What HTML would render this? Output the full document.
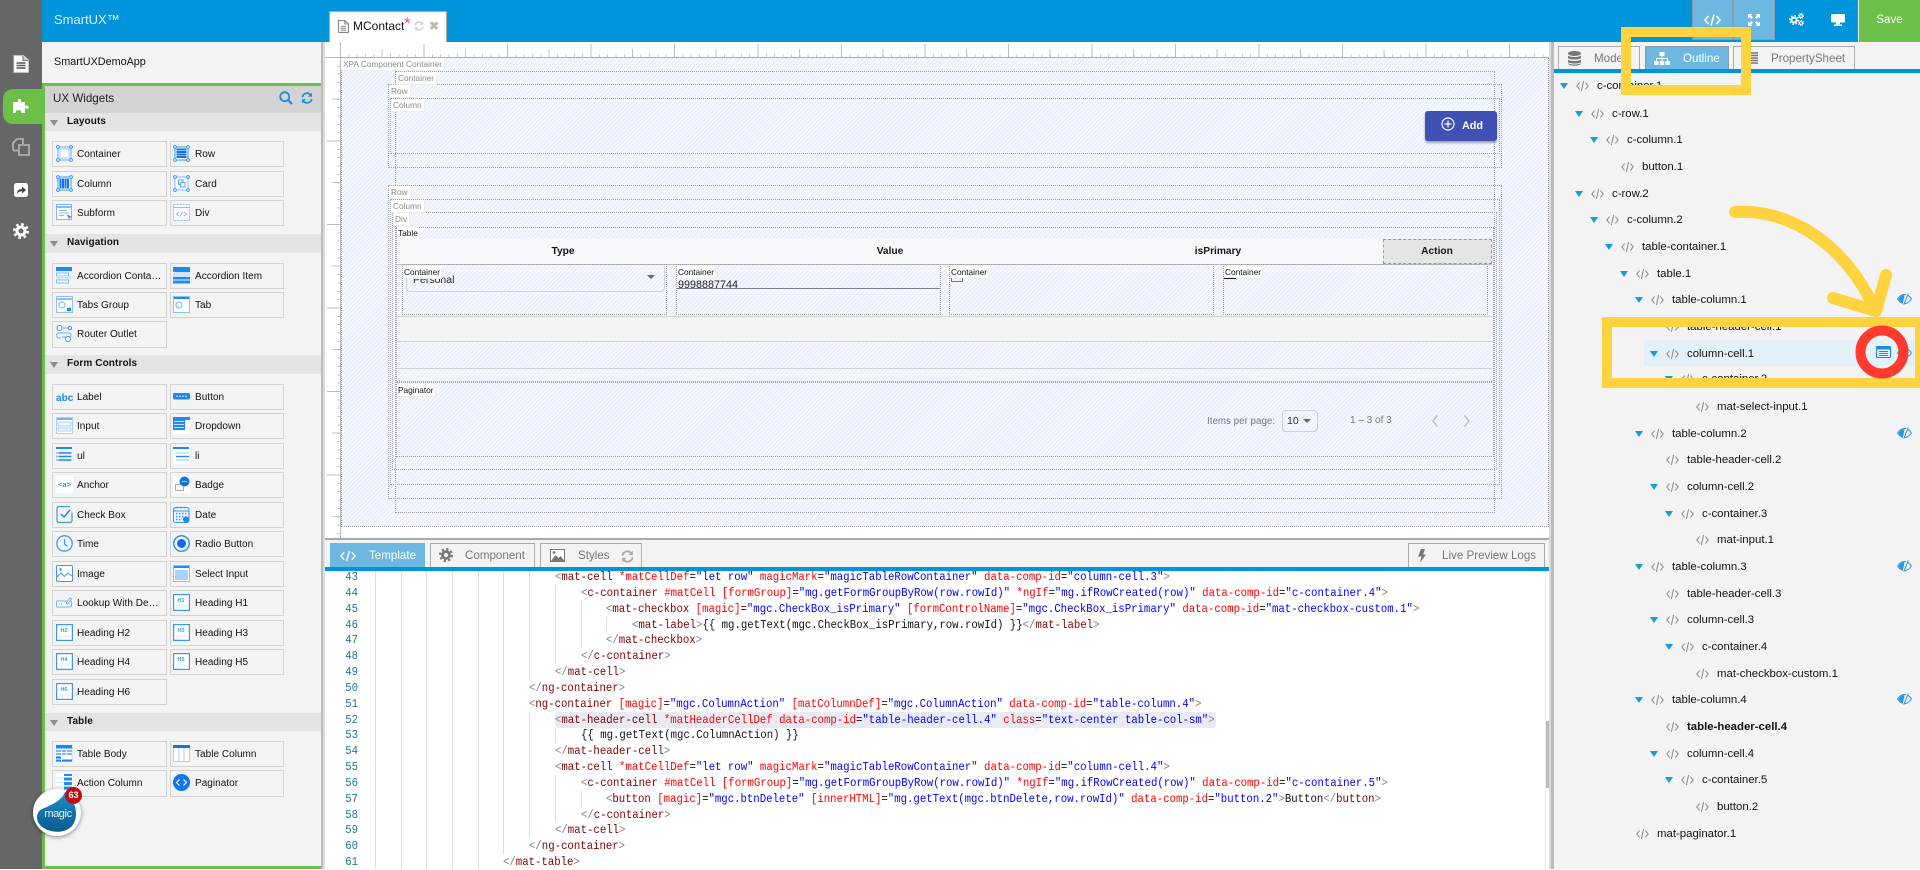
<!DOCTYPE html>
<html lang="en"><head><meta charset="utf-8"><title>SmartUX</title>
<style>
*{box-sizing:border-box}
html,body{margin:0;padding:0;width:1920px;height:869px;overflow:hidden;background:#fff;font-family:"Liberation Sans",Arial,sans-serif;color:#111}
.p{position:absolute}
svg{display:block;overflow:visible}
.w{position:absolute;height:26px;line-height:25px;font-size:10px;border:1px solid #d2d2d2;padding-left:24px;white-space:nowrap;letter-spacing:.03px}
.c1{left:52px;width:115px}.c2{left:170px;width:114px}
.w svg{position:absolute;left:3px;top:3px;width:17px;height:17px}
.c2 svg{left:2px}
.sec{position:absolute;left:45px;width:276px;background:#e4e4e4;font-weight:bold;font-size:10px;padding-left:22px;letter-spacing:.1px}
.sec:before{content:"";position:absolute;left:5px;top:7px;border-top:6px solid #8b8b8b;border-left:4.5px solid transparent;border-right:4.5px solid transparent}
.hatch{background:repeating-linear-gradient(135deg,#e9eefc 0 1.5px,#f7f9ff 1.5px 3px)}
.b{position:absolute;border:1px dotted #a3a3ad}
.l{position:absolute;background:#fff;font-size:8.3px;line-height:12px;height:12px;color:#8a8a8a;padding:0 2px;white-space:nowrap;box-shadow:1px 1px 0 #eee}
.l.k{color:#111;padding:0 1px}
.th{position:absolute;top:239px;height:25px;line-height:25px;font-weight:bold;font-size:10.2px;transform:translateX(-50%);color:#151515}
.tab{position:absolute;height:24px;border:1px solid #aaa;border-bottom:0;font-size:11.6px;line-height:23px;color:#777;background:#f3f3f3}
.tab span{position:absolute;white-space:nowrap}
.cl{position:absolute;left:375px;height:16px;font:11.7px/16px "Liberation Mono",monospace;white-space:pre;color:#111;transform:scaleX(.913);transform-origin:0 0}
.ln{position:absolute;left:334px;width:24px;text-align:right;font:11.7px/16px "Liberation Mono",monospace;color:#237893;transform:scaleX(.913);transform-origin:100% 0}
.g{color:#808080}.t{color:#800000}.a{color:#f00}.v{color:#00f}
.gd{position:absolute;width:1px;background:#dcdcdc}
.r{position:absolute;left:calc(1557px + var(--l)*15px);height:16px;line-height:18px;font-size:11.4px;padding-left:40px;white-space:nowrap;color:#111}
.r svg{position:absolute;left:18.5px;top:2.5px;width:13px;height:12px}
.r.o:before{content:"";position:absolute;left:2.5px;top:6px;border-top:6px solid #1a9ad9;border-left:4.5px solid transparent;border-right:4.5px solid transparent}
.eye{position:absolute;left:1897px;width:15px;height:12px}
.hx{font:bold 5.5px "Liberation Sans",sans-serif;fill:#3b97f3}
</style></head><body>

<svg width="0" height="0" style="position:absolute"><defs>
<symbol id="c" viewBox="0 0 13 12"><path d="M3.6 2.6L.8 6l2.8 3.4M9.4 2.6L12.2 6 9.4 9.4M7.6 1L5.4 11" fill="none" stroke="#8a8a8a" stroke-width="1"/></symbol>
<symbol id="h" viewBox="0 0 17 17"><circle cx="2" cy="2" r="1.4" fill="#fff" stroke="#3b97f3"/><circle cx="15" cy="2" r="1.4" fill="#fff" stroke="#3b97f3"/><circle cx="2" cy="15" r="1.4" fill="#fff" stroke="#3b97f3"/><circle cx="15" cy="15" r="1.4" fill="#fff" stroke="#3b97f3"/></symbol>
<symbol id="container" viewBox="0 0 17 17"><rect x="2" y="2" width="13" height="13" fill="#eaf4ff" stroke="#6fb2f7"/><rect x="4" y="4" width="9" height="9" fill="#fff" stroke="#a9d2fa"/><use href="#h"/></symbol>
<symbol id="row" viewBox="0 0 17 17"><rect x="2" y="2" width="13" height="13" fill="#fff" stroke="#3b97f3"/><path d="M3.500 4.500h10M3.500 7h10M3.500 9.500h10M3.500 12h10" stroke="#1273e6" stroke-width="2"/><use href="#h"/></symbol>
<symbol id="column" viewBox="0 0 17 17"><rect x="2" y="2" width="13" height="13" fill="#fff" stroke="#3b97f3"/><path d="M4.500 3.500v10M7 3.500v10M9.500 3.500v10M12 3.500v10" stroke="#1273e6" stroke-width="2"/><use href="#h"/></symbol>
<symbol id="card" viewBox="0 0 17 17"><rect x="2" y="2" width="13" height="13" fill="#f5f9ff" stroke="#8cc1f8"/><rect x="5.500" y="5" width="4.500" height="4.500" fill="none" stroke="#5aa7f5"/><rect x="7.500" y="7.500" width="4.500" height="4.500" fill="#fff" stroke="#5aa7f5"/><use href="#h"/></symbol>
<symbol id="subform" viewBox="0 0 17 17"><rect x=".5" y=".5" width="15" height="15" fill="#fff" stroke="#7db9f7"/><path d="M1 3h14" stroke="#7db9f7" stroke-width="2"/><path d="M3 6.500h8M3 9h10M3 11.500h5" stroke="#7db9f7"/><path d="M10.500 10l5.500 3-2.500 1v2.500z" fill="#3b97f3"/></symbol>
<symbol id="div" viewBox="0 0 17 17"><rect x=".5" y=".5" width="16" height="16" fill="#f7fbff" stroke="#8cc1f8" stroke-dasharray="2 1"/><path d="M.5 3.500h16" stroke="#8cc1f8"/><path d="M6 8l-2.500 2L6 12M11 8l2.500 2-2.500 2M9.500 7.500l-2 5" fill="none" stroke="#b6a7f0"/></symbol>
<symbol id="accc" viewBox="0 0 17 17"><rect y="0" width="16" height="4" fill="#1e88f5"/><rect x=".5" y="6" width="12" height="3" fill="#fff" stroke="#7db9f7"/><rect x=".5" y="9" width="15" height="3" fill="#cfe5fc"/><rect x=".5" y="13" width="12" height="3" fill="#fff" stroke="#7db9f7"/></symbol>
<symbol id="acci" viewBox="0 0 17 17"><rect width="17" height="5" fill="#1e88f5"/><rect y="5" width="17" height="5" fill="#cfe5fc"/><rect y="10" width="17" height="2.500" fill="#1e88f5"/><rect y="13.500" width="17" height="3" fill="#1e88f5"/></symbol>
<symbol id="tabs" viewBox="0 0 17 17"><rect x=".5" y=".5" width="16" height="16" fill="#fff" stroke="#8cc1f8"/><path d="M1 3h15" stroke="#8cc1f8" stroke-width="2"/><circle cx="6" cy="9" r="3" fill="none" stroke="#6fb2f7"/><rect x="11" y="12" width="4" height="3" fill="#1e88f5"/></symbol>
<symbol id="tab" viewBox="0 0 17 17"><rect x=".5" y=".5" width="16" height="16" fill="#fff" stroke="#8cc1f8"/><path d="M1 2h15" stroke="#1e88f5" stroke-width="2"/><circle cx="6" cy="9" r="3" fill="none" stroke="#6fb2f7"/></symbol>
<symbol id="router" viewBox="0 0 17 17"><path d="M5 3h8M3 8h10a2 2 0 0 1 0 4H6M5 13H3a2 2 0 0 1 0-5" fill="none" stroke="#6fb2f7"/><circle cx="3.500" cy="3" r="2.500" fill="#fff" stroke="#3b97f3"/><circle cx="14" cy="3" r="1.500" fill="#fff" stroke="#3b97f3"/><circle cx="12" cy="14" r="2.500" fill="#fff" stroke="#3b97f3"/></symbol>
<symbol id="button" viewBox="0 0 17 17"><rect y="5" width="17" height="6.500" rx="1.500" fill="#1e88f5"/><path d="M3 8.300h11" stroke="#cfe5fc" stroke-dasharray="2 1"/></symbol>
<symbol id="input" viewBox="0 0 17 17"><rect x=".5" y=".5" width="16" height="16" fill="#fff" stroke="#a9d2fa"/><path d="M1 2h15" stroke="#6fb2f7" stroke-width="2"/><rect x="2" y="5" width="13" height="4" fill="#f4f9ff" stroke="#a9d2fa"/><rect x="2" y="11" width="13" height="3" fill="#f4f9ff" stroke="#a9d2fa"/></symbol>
<symbol id="dropdown" viewBox="0 0 17 17"><rect width="17" height="17" fill="#fff"/><path d="M0 1.500h17" stroke="#1e88f5" stroke-width="3"/><rect x="0" y="0" width="12" height="13" fill="#1e88f5"/><path d="M1 4.500h10M1 7.500h10M1 10.500h10" stroke="#cfe5fc"/></symbol>
<symbol id="ul" viewBox="0 0 17 17"><rect width="16" height="2" y="0" fill="#1e88f5"/><path d="M2.500 6h13M2.500 9.500h13M2.500 13h13" stroke="#1e88f5" stroke-width="1.500"/><path d="M.5 6h1M.5 9.500h1M.5 13h1" stroke="#1e88f5" stroke-width="1.500"/></symbol>
<symbol id="li" viewBox="0 0 17 17"><rect width="17" height="17" fill="#fff"/><rect width="16" height="2" fill="#1e88f5"/><path d="M3 6h13M3 13h13" stroke="#bcdcfb" stroke-width="1.500"/><path d="M3 9.500h13" stroke="#1e88f5" stroke-width="1.300"/></symbol>
<symbol id="badge" viewBox="0 0 17 17"><rect width="17" height="17" fill="#fff"/><rect x="2.500" y="8.500" width="8" height="6" fill="none" stroke="#aaa"/><circle cx="11.500" cy="5.500" r="5" fill="#1273e6"/><path d="M9 5.500h5" stroke="#fff" stroke-dasharray="1.500 .7"/></symbol>
<symbol id="check" viewBox="0 0 17 17"><path d="M14 1H3a2 2 0 0 0-2 2v12a2 2 0 0 0 2 2h11a2 2 0 0 0 2-2V7" transform="translate(0 -.5)" fill="none" stroke="#3b97f3" stroke-width="1.200"/><path d="M5 8l3 3 6-7" fill="none" stroke="#1e88f5" stroke-width="1.500"/></symbol>
<symbol id="date" viewBox="0 0 17 17"><rect x=".5" y="1.500" width="15.500" height="15" rx="2" fill="#eaf4ff" stroke="#3b97f3"/><path d="M1 5h15" stroke="#3b97f3"/><path d="M4 .5v2M8 .5v2M12 .5v2" stroke="#3b97f3"/><path d="M3 7.500h10M3 10.500h10M3 13.500h5" stroke="#3b97f3" stroke-dasharray="1.500 1.500" stroke-width="1.500"/><circle cx="13" cy="13.500" r="3" fill="#1e88f5"/></symbol>
<symbol id="time" viewBox="0 0 17 17"><circle cx="8.500" cy="8.500" r="7.700" fill="#f4f9ff" stroke="#3b97f3" stroke-width="1.300"/><path d="M8.500 4v5l3 2.500" fill="none" stroke="#3b97f3" stroke-width="1.200"/></symbol>
<symbol id="radio" viewBox="0 0 17 17"><circle cx="8.500" cy="8.500" r="7.700" fill="#fff" stroke="#1e88f5" stroke-width="1.400"/><circle cx="8.500" cy="8.500" r="4.500" fill="#0a6cf0"/></symbol>
<symbol id="image" viewBox="0 0 17 17"><rect x=".5" y=".5" width="16" height="16" rx="1.500" fill="#fff" stroke="#3b97f3"/><circle cx="4.500" cy="4.500" r="1.300" fill="#3b97f3"/><path d="M1 12l4-4 3.500 3.500L12 8l4 3" fill="none" stroke="#3b97f3"/></symbol>
<symbol id="select" viewBox="0 0 17 17"><rect x=".5" y=".5" width="16" height="16" fill="#fff" stroke="#8cc1f8"/><path d="M1 2h15" stroke="#1e88f5" stroke-width="2"/><rect x="2" y="5" width="13" height="10" fill="#a9d2fa"/></symbol>
<symbol id="lookup" viewBox="0 0 17 17"><rect x=".5" y="7" width="15" height="6" rx="1.500" fill="#f4f9ff" stroke="#6fb2f7"/><path d="M10 9l4-5 1.500 1-4 5z" fill="#fff" stroke="#6fb2f7"/><path d="M3 10h4" stroke="#6fb2f7" stroke-dasharray="1 1"/></symbol>
<symbol id="hn" viewBox="0 0 17 17"><rect x=".6" y=".6" width="15.800" height="15.800" fill="#fff" stroke="#3b97f3" stroke-width="1.200"/><path d="M3 10.500h11v3h-6l-2 2H3z" fill="#eef5fd"/></symbol>
<symbol id="tbody" viewBox="0 0 17 17"><rect width="16" height="16.500" fill="#fff" stroke="#8cc1f8" stroke-width=".5"/><rect width="16" height="3.500" fill="#1e88f5"/><path d="M0 6h16M0 9h16" stroke="#7db9f7" stroke-width="2"/><rect y="11.500" width="5" height="2" fill="#1273e6"/><rect y="14.500" width="16" height="2" fill="#1e88f5"/><path d="M5.500 4v12M10.500 4v8" stroke="#fff"/></symbol>
<symbol id="tcol" viewBox="0 0 17 17"><rect x=".5" y=".5" width="16" height="16" fill="#fff" stroke="#a9d2fa"/><rect width="17" height="3" fill="#1273e6"/><path d="M6 3v13M11 3v13" stroke="#a9d2fa"/></symbol>
<symbol id="acol" viewBox="0 0 17 17"><rect width="17" height="17" fill="#fff"/><path d="M0 4h8M0 8.500h8M0 13h8" stroke="#cfe5fc"/><rect x="8" width="8" height="2" fill="#1e88f5"/><rect x="8" y="3.500" width="8" height="3" fill="#1e88f5"/><rect x="8" y="8" width="8" height="3" fill="#1e88f5"/><rect x="8" y="12.500" width="8" height="3" fill="#1e88f5"/></symbol>
<symbol id="pag" viewBox="0 0 17 17"><circle cx="8.500" cy="8.500" r="8.500" fill="#0a78f0"/><path d="M6.500 5.500l-3 3 3 3M10.500 5.500l3 3-3 3" fill="none" stroke="#fff" stroke-width="1.200"/></symbol>
<symbol id="gear" viewBox="0 0 16 16"><circle cx="8" cy="8" r="4" fill="none" stroke="currentColor" stroke-width="3"/><circle cx="8" cy="8" r="6.700" fill="none" stroke="currentColor" stroke-width="2.600" stroke-dasharray="2.600 2.660"/></symbol>
<symbol id="ref" viewBox="0 0 14 14"><path d="M1.500 6a5.500 5.500 0 0 1 9.500-2.800M12.500 8A5.500 5.500 0 0 1 3 10.800" fill="none" stroke="currentColor" stroke-width="2"/><path d="M12.800 .8v4.700H8.100zM1.200 13.200V8.500h4.700z" fill="currentColor"/></symbol>
<symbol id="doc" viewBox="0 0 12 14"><path d="M.6.600h7l3.800 3.600v9.200H.6z" fill="#fff" stroke="#777"/><path d="M7.500.6v3.600h3.800M2.800 6.800h6M2.800 9h6M2.800 11h6" fill="none" stroke="#777"/></symbol>
<symbol id="eye" viewBox="0 0 15 12"><path d="M.6 6C2.500 3 5 1.500 7.500 1.500S12.500 3 14.400 6c-1.900 3-4.400 4.500-6.900 4.500S2.500 9 .6 6z" fill="none" stroke="#2a95dd" stroke-width="1"/><path d="M1.500 6C3 3.500 5.500 2 7.500 2L6 10C4 9.500 2.500 8 1.500 6z" fill="#2a95dd"/><path d="M10.500 .3L6 11.700" stroke="#f3f3f3" stroke-width="1.300"/><path d="M11.300 .5L6.800 11.700" stroke="#2a95dd"/></symbol>
</defs></svg>

<!-- rail -->
<div class="p" style="left:0;top:0;width:42px;height:869px;background:#666"></div>
<div class="p" style="left:3px;top:89px;width:39px;height:35px;background:#6cc04a;border-radius:10px 0 0 10px"></div>
<svg class="p" style="left:13px;top:55px;width:16px;height:18px" viewBox="0 0 16 18"><path d="M1 .7h9.500L15.300 5v12.300H1z" fill="#fff" stroke="#ddd" stroke-width="1"/><path d="M3.500 8h9M3.500 10.500h9M3.500 13h9" stroke="#555" stroke-width="1.500"/><path d="M10 1v4.500h5" fill="#ccc" stroke="#555" stroke-width=".8"/></svg>
<svg class="p" style="left:13px;top:97px;width:18px;height:17px" viewBox="0 0 18 17"><path d="M5 3.500c-1-2 4-2 3 0v1.500h4v4c2-1 4 0 3.800 1.500S13 12 12 11v5H8c1-2-1-3-2.500-3S2 14 3 16H0V5h5z" fill="#fff"/></svg>
<svg class="p" style="left:12px;top:138px;width:18px;height:18px" viewBox="0 0 18 18"><path d="M1 12.500V5L5 1h6v5" fill="none" stroke="#b0b0b0" stroke-width="1.800"/><path d="M7 7h10v10H7z" fill="#666" stroke="#b0b0b0" stroke-width="1.800"/><path d="M1 12.500h6" stroke="#b0b0b0" stroke-width="1.800"/></svg>
<svg class="p" style="left:14px;top:183px;width:14px;height:14px" viewBox="0 0 14 14"><rect width="14" height="14" rx="2.500" fill="#fff"/><path d="M3 11C3 7.500 5 6 8 6V3.500L12 7l-4 3.500V8.200C6 8.200 4 9 3 11z" fill="#444"/></svg>
<svg class="p" style="left:13px;top:223px;width:16px;height:16px;color:#fff"><use href="#gear"/></svg>

<!-- header -->
<div class="p" style="left:42px;top:0;width:1878px;height:42px;background:#0095da"></div>
<div class="p" style="left:54px;top:11px;font-size:13px;line-height:18px;color:#d9f0fb">SmartUX™</div>
<div class="p" style="left:329px;top:11px;width:118px;height:31px;background:#fff;border:1px solid #aaa;border-bottom:0"></div>
<svg class="p" style="left:338px;top:20px;width:11px;height:13px"><use href="#doc"/></svg>
<div class="p" style="left:353px;top:17px;font-size:12px;line-height:18px;color:#111">MContact</div>
<div class="p" style="left:404px;top:17px;font-size:17px;line-height:14px;color:#f0507c">*</div>
<svg class="p" style="left:414px;top:21px;width:10px;height:10px;color:#ccc"><use href="#ref"/></svg>
<div class="p" style="left:429px;top:18px;font-size:12px;font-weight:bold;line-height:16px;color:#bbb">✖</div>

<div class="p" style="left:1692px;top:0;width:41px;height:40px;background:#6db8e0;border:1px solid #8c9aa5;border-top:0"></div>
<div class="p" style="left:1733px;top:0;width:42px;height:40px;background:#6db8e0;border:1px solid #8c9aa5;border-top:0"></div>
<svg class="p" style="left:1704px;top:14px;width:17px;height:12px" viewBox="0 0 17 12"><path d="M4.500 2L1 6l3.500 4M12.500 2L16 6l-3.500 4M10 .5l-3 11" fill="none" stroke="#fff" stroke-width="1.600"/></svg>
<svg class="p" style="left:1748px;top:14px;width:12px;height:12px" viewBox="0 0 12 12"><path d="M0 0h4.500L3 1.500l2 2L3.500 5l-2-2L0 4.500zM12 0v4.500L10.500 3l-2 2L7 3.500l2-2L7.500 0zM0 12V7.500L1.500 9l2-2L5 8.500l-2 2L4.500 12zM12 12H7.500L9 10.500l-2-2L8.500 7l2 2L12 7.500z" fill="#fff"/></svg>
<svg class="p" style="left:1789px;top:15px;width:10px;height:10px;color:#fff"><use href="#gear"/></svg>
<svg class="p" style="left:1798px;top:13px;width:6px;height:6px;color:#fff"><use href="#gear"/></svg>
<svg class="p" style="left:1798px;top:20px;width:6px;height:6px;color:#fff"><use href="#gear"/></svg>
<svg class="p" style="left:1831px;top:14px;width:14px;height:12px" viewBox="0 0 14 12"><rect width="14" height="8.500" rx="1" fill="#fff"/><rect x="5" y="8.500" width="4" height="2" fill="#fff"/><rect x="3" y="10.500" width="8" height="1.500" fill="#fff"/></svg>
<div class="p" style="left:1858px;top:0;width:62px;height:42px;background:#6cc04a;border-left:1px solid #e8f4e0;color:#fff;font-size:11.5px;line-height:41px;text-align:center">Save</div>

<!-- left panel -->
<div class="p" style="left:42px;top:42px;width:279px;height:827px;background:#f3f3f3"></div>
<div class="p" style="left:54px;top:53px;font-size:10.8px;line-height:18px;color:#111">SmartUXDemoApp</div>
<div class="p" style="left:42px;top:83px;width:279px;height:3px;background:#6cc04a"></div>
<div class="p" style="left:42px;top:86px;width:3px;height:783px;background:#6cc04a"></div>
<div class="p" style="left:42px;top:866px;width:279px;height:3px;background:#6cc04a"></div>
<div class="p" style="left:45px;top:86px;width:276px;height:27px;background:#d3d3d3;font-size:11.6px;line-height:26px;padding-left:8px;color:#222">UX Widgets</div>
<svg class="p" style="left:279px;top:91px;width:14px;height:14px" viewBox="0 0 14 14"><circle cx="5.700" cy="5.700" r="4.500" fill="none" stroke="#1a8fd8" stroke-width="1.800"/><path d="M9 9l4 4" stroke="#1a8fd8" stroke-width="2.200"/></svg>
<svg class="p" style="left:301px;top:92px;width:12px;height:12px;color:#1a8fd8"><use href="#ref"/></svg>

<div class="sec" style="top:113px;height:18px;line-height:18px">Layouts</div>
<div class="w c1" style="top:141px"><svg><use href="#container"/></svg>Container</div>
<div class="w c2" style="top:141px"><svg><use href="#row"/></svg>Row</div>
<div class="w c1" style="top:171px"><svg><use href="#column"/></svg>Column</div>
<div class="w c2" style="top:171px"><svg><use href="#card"/></svg>Card</div>
<div class="w c1" style="top:200px"><svg><use href="#subform"/></svg>Subform</div>
<div class="w c2" style="top:200px"><svg><use href="#div"/></svg>Div</div>

<div class="sec" style="top:234px;height:19px;line-height:18px">Navigation</div>
<div class="w c1" style="top:263px"><svg><use href="#accc"/></svg>Accordion Conta…</div>
<div class="w c2" style="top:263px"><svg><use href="#acci"/></svg>Accordion Item</div>
<div class="w c1" style="top:292px"><svg><use href="#tabs"/></svg>Tabs Group</div>
<div class="w c2" style="top:292px"><svg><use href="#tab"/></svg>Tab</div>
<div class="w c1" style="top:321px;height:27px"><svg><use href="#router"/></svg>Router Outlet</div>

<div class="sec" style="top:355px;height:19px;line-height:18px">Form Controls</div>
<div class="w c1" style="top:384px"><span style="position:absolute;left:3px;top:3px;font:bold 10px/22px 'Liberation Sans',sans-serif;color:#1e88f5">abc</span>Label</div>
<div class="w c2" style="top:384px"><svg><use href="#button"/></svg>Button</div>
<div class="w c1" style="top:413px"><svg><use href="#input"/></svg>Input</div>
<div class="w c2" style="top:413px"><svg><use href="#dropdown"/></svg>Dropdown</div>
<div class="w c1" style="top:443px"><svg><use href="#ul"/></svg>ul</div>
<div class="w c2" style="top:443px"><svg><use href="#li"/></svg>li</div>
<div class="w c1" style="top:472px"><span style="position:absolute;left:3px;top:3px;width:17px;height:17px;background:#fff;border-radius:2px;font:bold 7.5px/18px 'Liberation Sans',sans-serif;color:#3b97f3;text-align:center">&lt;a&gt;</span>Anchor</div>
<div class="w c2" style="top:472px"><svg><use href="#badge"/></svg>Badge</div>
<div class="w c1" style="top:502px"><svg><use href="#check"/></svg>Check Box</div>
<div class="w c2" style="top:502px"><svg><use href="#date"/></svg>Date</div>
<div class="w c1" style="top:531px"><svg><use href="#time"/></svg>Time</div>
<div class="w c2" style="top:531px"><svg><use href="#radio"/></svg>Radio Button</div>
<div class="w c1" style="top:561px"><svg><use href="#image"/></svg>Image</div>
<div class="w c2" style="top:561px"><svg><use href="#select"/></svg>Select Input</div>
<div class="w c1" style="top:590px"><svg><use href="#lookup"/></svg>Lookup With De…</div>
<div class="w c2" style="top:590px"><svg><use href="#hn"/><text x="4.500" y="8" class="hx">H1</text></svg>Heading H1</div>
<div class="w c1" style="top:620px"><svg><use href="#hn"/><text x="4.500" y="8" class="hx">H2</text></svg>Heading H2</div>
<div class="w c2" style="top:620px"><svg><use href="#hn"/><text x="4.500" y="8" class="hx">H3</text></svg>Heading H3</div>
<div class="w c1" style="top:649px"><svg><use href="#hn"/><text x="4.500" y="8" class="hx">H4</text></svg>Heading H4</div>
<div class="w c2" style="top:649px"><svg><use href="#hn"/><text x="4.500" y="8" class="hx">H5</text></svg>Heading H5</div>
<div class="w c1" style="top:679px"><svg><use href="#hn"/><text x="4.500" y="8" class="hx">H6</text></svg>Heading H6</div>

<div class="sec" style="top:713px;height:18px;line-height:18px">Table</div>
<div class="w c1" style="top:741px"><svg><use href="#tbody"/></svg>Table Body</div>
<div class="w c2" style="top:741px"><svg><use href="#tcol"/></svg>Table Column</div>
<div class="w c1" style="top:770px;height:27px"><svg><use href="#acol"/></svg>Action Column</div>
<div class="w c2" style="top:770px;height:27px"><svg><use href="#pag"/></svg>Paginator</div>

<!-- magic -->
<div class="p" style="left:33px;top:789px;width:48px;height:47px;border-radius:50%;background:#fff;box-shadow:0 1px 4px rgba(0,0,0,.45)"></div>
<svg class="p" style="left:33px;top:789px;width:48px;height:47px" viewBox="0 0 48 47"><defs><linearGradient id="mg" x1="0" y1="0" x2="0" y2="1"><stop offset="0" stop-color="#1b8fc9"/><stop offset="1" stop-color="#0a5a90"/></linearGradient></defs><path d="M32 3C29 11 19 16 9 20 3 23 2 31 8 37c8 7 22 8 30 1 8-8 7-24-6-35z" fill="url(#mg)"/></svg>
<div class="p" style="left:35px;top:807px;width:46px;text-align:center;font-size:11px;line-height:14px;color:#e8f4fb;letter-spacing:-.4px">magic</div>
<div class="p" style="left:65px;top:787px;width:17px;height:17px;border-radius:50%;background:#c80a10;color:#fff;font-weight:bold;font-size:9px;line-height:17px;text-align:center">63</div>

<!-- separators -->
<div class="p" style="left:321px;top:42px;width:2px;height:827px;background:#bbb"></div>
<div class="p" style="left:323px;top:42px;width:2px;height:827px;background:#dcdcdc"></div>

<!-- rulers -->
<div class="p" style="left:325px;top:42px;width:1224px;height:498px;background:#fff"></div>
<div class="p" style="left:340px;top:42px;width:1209px;height:15px;background:
repeating-linear-gradient(90deg,#bbb 0 1px,transparent 1px 83.5px) 0 100%/100% 13px no-repeat,
repeating-linear-gradient(90deg,#c4c4c4 0 1px,transparent 1px 41.75px) 0 100%/100% 8px no-repeat,
repeating-linear-gradient(90deg,#ccc 0 1px,transparent 1px 8.35px) 0 100%/100% 3px no-repeat"></div>
<div class="p" style="left:325px;top:57px;width:15px;height:481px;background:
repeating-linear-gradient(180deg,#bbb 0 1px,transparent 1px 83.5px) 100% 0/13px 100% no-repeat,
repeating-linear-gradient(180deg,#c4c4c4 0 1px,transparent 1px 41.75px) 100% 0/8px 100% no-repeat,
repeating-linear-gradient(180deg,#ccc 0 1px,transparent 1px 8.35px) 100% 0/3px 100% no-repeat"></div>
<div class="p" style="left:340px;top:42px;width:1px;height:496px;background:#bbb"></div>
<div class="p" style="left:325px;top:57px;width:1224px;height:1px;background:#bbb"></div>

<!-- canvas -->
<div class="p hatch" style="left:341px;top:58px;width:1208px;height:469px"></div>
<div class="b" style="left:341px;top:57px;width:1208px;height:470px"></div>
<div class="b" style="left:395px;top:71px;width:1100px;height:442px"></div>
<div class="b" style="left:388px;top:84px;width:1114px;height:84px"></div>
<div class="b" style="left:390px;top:98px;width:1110px;height:56px"></div>
<div class="b" style="left:388px;top:185px;width:1114px;height:314px"></div>
<div class="b" style="left:390px;top:199px;width:1110px;height:286px"></div>
<div class="b" style="left:392px;top:212px;width:1105px;height:258px"></div>
<div class="b" style="left:396px;top:227px;width:1098px;height:230px"></div>
<div class="b" style="left:396px;top:382px;width:1098px;height:75px"></div>

<div class="l" style="left:341px;top:58px">XPA Component Container</div>
<div class="l" style="left:396px;top:72px">Container</div>
<div class="l" style="left:389px;top:85px">Row</div>
<div class="l" style="left:391px;top:99px">Column</div>
<div class="l" style="left:389px;top:186px">Row</div>
<div class="l" style="left:391px;top:200px">Column</div>
<div class="l" style="left:393px;top:213px">Div</div>
<div class="l k" style="left:397px;top:227px">Table</div>

<div class="p" style="left:1425px;top:111px;width:72px;height:30px;background:#3f51b5;border-radius:3px;box-shadow:0 2px 2px rgba(0,0,0,.35);color:#fff;font-weight:bold;font-size:10.8px;line-height:30px;padding-left:37px">Add</div>
<svg class="p" style="left:1441px;top:117px;width:14px;height:14px" viewBox="0 0 14 14"><circle cx="7" cy="7" r="6" fill="none" stroke="#fff" stroke-width="1.200"/><path d="M7 3.500v7M3.500 7h7" stroke="#fff" stroke-width="1.200"/></svg>

<div class="p" style="left:398px;top:239px;width:1094px;height:25px;background:#f6f8fa"></div>
<div class="th" style="left:563px">Type</div>
<div class="th" style="left:890px">Value</div>
<div class="th" style="left:1218px">isPrimary</div>
<div class="p" style="left:1383px;top:239px;width:109px;height:25px;background:#e5e5e5;border:1px dashed #999"></div>
<div class="th" style="left:1437px">Action</div>

<div class="p" style="left:397px;top:264px;width:1095px;height:1px;background:#bbb"></div>
<div class="b" style="left:402px;top:264px;width:265px;height:51px"></div>
<div class="b" style="left:676px;top:264px;width:265px;height:51px"></div>
<div class="b" style="left:949px;top:264px;width:265px;height:51px"></div>
<div class="b" style="left:1223px;top:264px;width:265px;height:51px"></div>
<div class="p" style="left:406px;top:266px;width:259px;height:26px;border:1px solid #cfcfd6;border-top:0;border-radius:0 0 4px 4px"></div>
<div class="p" style="left:413px;top:273px;font-size:10.5px;line-height:14px;color:#222">Personal</div>
<div class="l k" style="left:403px;top:266px">Container</div>
<div class="p" style="left:647px;top:275px;border-top:4.500px solid #666;border-left:4px solid transparent;border-right:4px solid transparent"></div>
<div class="p" style="left:678px;top:278px;font-size:10.8px;line-height:14px;color:#222">9998887744</div>
<div class="l k" style="left:677px;top:266px">Container</div>
<div class="p" style="left:677px;top:288px;width:263px;height:1px;background:#80808a"></div>
<div class="l k" style="left:950px;top:266px">Container</div>
<div class="p" style="left:951px;top:278px;width:12px;height:4px;border:1px solid #777;border-top:0"></div>
<div class="l k" style="left:1224px;top:266px">Container</div>
<div class="p" style="left:1224px;top:278px;width:12px;height:1px;background:#111"></div>

<div class="p" style="left:397px;top:316px;width:1095px;height:26px;background:#f3f3f3;border-top:1px solid #d0d0d0;border-bottom:1px solid #d0d0d0"></div>
<div class="p" style="left:397px;top:368px;width:1095px;height:1px;background:#d0d0d0"></div>
<div class="p" style="left:397px;top:381px;width:1095px;height:1px;border-top:1px dotted #a3a3ad"></div>

<div class="l k" style="left:397px;top:384px">Paginator</div>
<div class="p" style="left:1207px;top:415px;font-size:9.8px;line-height:14px;color:#777">Items per page:</div>
<div class="p" style="left:1282px;top:410px;width:36px;height:22px;border:1px solid #cfcfcf;border-radius:4px"></div>
<div class="p" style="left:1287px;top:414px;font-size:10.5px;line-height:14px;color:#333">10</div>
<div class="p" style="left:1303px;top:419px;border-top:4.500px solid #666;border-left:4px solid transparent;border-right:4px solid transparent"></div>
<div class="p" style="left:1350px;top:414px;font-size:10px;line-height:14px;color:#777">1 – 3 of 3</div>
<svg class="p" style="left:1431px;top:414px;width:38px;height:14px" viewBox="0 0 42 14"><path d="M7 1L2 7l5 6M37 1l5 6-5 6" fill="none" stroke="#bbb" stroke-width="1.500"/></svg>

<!-- bottom tabs -->
<div class="p" style="left:325px;top:538px;width:1224px;height:2px;background:#aaa"></div>
<div class="p" style="left:325px;top:540px;width:1224px;height:27px;background:#f3f3f3"></div>
<div class="tab" style="left:330px;top:543px;width:95px;background:#6db8e0;border-color:#6db8e0;color:#fff">
<svg style="position:absolute;left:9px;top:6px;width:16px;height:12px" viewBox="0 0 17 12"><path d="M4.500 2L1 6l3.500 4M12.500 2L16 6l-3.500 4M10 .5l-3 11" fill="none" stroke="#fff" stroke-width="1.500"/></svg><span style="left:38px">Template</span></div>
<div class="tab" style="left:430px;top:543px;width:105px">
<svg style="position:absolute;left:8px;top:4px;width:14px;height:14px;color:#777"><use href="#gear"/></svg><span style="left:34px">Component</span></div>
<div class="tab" style="left:540px;top:543px;width:102px">
<svg style="position:absolute;left:9px;top:5px;width:15px;height:13px" viewBox="0 0 15 13"><rect x=".5" y=".5" width="14" height="12" fill="#fff" stroke="#777"/><path d="M1 12l4.500-6 3 3 2-2 4 5z" fill="#777"/><circle cx="4" cy="3.500" r="1.400" fill="#777"/></svg><span style="left:37px">Styles</span>
<svg style="position:absolute;left:80px;top:6px;width:13px;height:13px;color:#aaa"><use href="#ref"/></svg></div>
<div class="tab" style="left:1408px;top:543px;width:137px">
<svg style="position:absolute;left:9px;top:5px;width:8px;height:14px" viewBox="0 0 8 14"><path d="M3 0h4L5 5.500h3L2 14l1.500-6.500H0z" fill="#777"/></svg><span style="left:33px">Live Preview Logs</span></div>
<div class="p" style="left:325px;top:567px;width:1224px;height:4px;background:#0095da"></div>

<!-- editor -->
<div class="p" style="left:325px;top:571px;width:1224px;height:298px;background:#fff"></div>
<div class="gd" style="left:375px;top:571px;height:298px"></div>
<div class="gd" style="left:401px;top:571px;height:298px"></div>
<div class="gd" style="left:426px;top:571px;height:298px"></div>
<div class="gd" style="left:452px;top:571px;height:298px"></div>
<div class="gd" style="left:478px;top:571px;height:298px"></div>
<div class="gd" style="left:503px;top:571px;height:283px"></div>
<div class="gd" style="left:529px;top:571px;height:109px"></div>
<div class="gd" style="left:529px;top:712px;height:126px"></div>
<div class="gd" style="left:555px;top:585px;height:79px"></div>
<div class="gd" style="left:555px;top:728px;height:15px"></div>
<div class="gd" style="left:555px;top:775px;height:47px"></div>
<div class="gd" style="left:581px;top:601px;height:47px"></div>
<div class="gd" style="left:581px;top:791px;height:16px"></div>
<div class="gd" style="left:606px;top:617px;height:16px"></div>
<div class="p" style="left:555px;top:712px;width:661px;height:16px;background:#e8ebf3;border-radius:3px"></div>

<div class="ln" style="top:569px">43</div>
<div class="ln" style="top:585px">44</div>
<div class="ln" style="top:601px">45</div>
<div class="ln" style="top:617px">46</div>
<div class="ln" style="top:632px">47</div>
<div class="ln" style="top:648px">48</div>
<div class="ln" style="top:664px">49</div>
<div class="ln" style="top:680px">50</div>
<div class="ln" style="top:696px">51</div>
<div class="ln" style="top:712px">52</div>
<div class="ln" style="top:727px">53</div>
<div class="ln" style="top:743px">54</div>
<div class="ln" style="top:759px">55</div>
<div class="ln" style="top:775px">56</div>
<div class="ln" style="top:791px">57</div>
<div class="ln" style="top:807px">58</div>
<div class="ln" style="top:822px">59</div>
<div class="ln" style="top:838px">60</div>
<div class="ln" style="top:854px">61</div>

<div class="cl" style="left:555px;top:569px"><span class="g">&lt;</span><span class="t">mat-cell</span> <span class="a">*matCellDef</span>=<span class="v">"let row"</span> <span class="a">magicMark</span>=<span class="v">"magicTableRowContainer"</span> <span class="a">data-comp-id</span>=<span class="v">"column-cell.3"</span><span class="g">&gt;</span></div>
<div class="cl" style="left:581px;top:585px"><span class="g">&lt;</span><span class="t">c-container</span> <span class="a">#matCell</span> <span class="a">[formGroup]</span>=<span class="v">"mg.getFormGroupByRow(row.rowId)"</span> <span class="a">*ngIf</span>=<span class="v">"mg.ifRowCreated(row)"</span> <span class="a">data-comp-id</span>=<span class="v">"c-container.4"</span><span class="g">&gt;</span></div>
<div class="cl" style="left:606px;top:601px"><span class="g">&lt;</span><span class="t">mat-checkbox</span> <span class="a">[magic]</span>=<span class="v">"mgc.CheckBox_isPrimary"</span> <span class="a">[formControlName]</span>=<span class="v">"mgc.CheckBox_isPrimary"</span> <span class="a">data-comp-id</span>=<span class="v">"mat-checkbox-custom.1"</span><span class="g">&gt;</span></div>
<div class="cl" style="left:632px;top:617px"><span class="g">&lt;</span><span class="t">mat-label</span><span class="g">&gt;</span>{{ mg.getText(mgc.CheckBox_isPrimary,row.rowId) }}<span class="g">&lt;/</span><span class="t">mat-label</span><span class="g">&gt;</span></div>
<div class="cl" style="left:606px;top:632px"><span class="g">&lt;/</span><span class="t">mat-checkbox</span><span class="g">&gt;</span></div>
<div class="cl" style="left:581px;top:648px"><span class="g">&lt;/</span><span class="t">c-container</span><span class="g">&gt;</span></div>
<div class="cl" style="left:555px;top:664px"><span class="g">&lt;/</span><span class="t">mat-cell</span><span class="g">&gt;</span></div>
<div class="cl" style="left:529px;top:680px"><span class="g">&lt;/</span><span class="t">ng-container</span><span class="g">&gt;</span></div>
<div class="cl" style="left:529px;top:696px"><span class="g">&lt;</span><span class="t">ng-container</span> <span class="a">[magic]</span>=<span class="v">"mgc.ColumnAction"</span> <span class="a">[matColumnDef]</span>=<span class="v">"mgc.ColumnAction"</span> <span class="a">data-comp-id</span>=<span class="v">"table-column.4"</span><span class="g">&gt;</span></div>
<div class="cl" style="left:555px;top:712px"><span class="g">&lt;</span><span class="t">mat-header-cell</span> <span class="a">*matHeaderCellDef</span> <span class="a">data-comp-id</span>=<span class="v">"table-header-cell.4"</span> <span class="a">class</span>=<span class="v">"text-center table-col-sm"</span><span class="g">&gt;</span></div>
<div class="cl" style="left:581px;top:727px">{{ mg.getText(mgc.ColumnAction) }}</div>
<div class="cl" style="left:555px;top:743px"><span class="g">&lt;/</span><span class="t">mat-header-cell</span><span class="g">&gt;</span></div>
<div class="cl" style="left:555px;top:759px"><span class="g">&lt;</span><span class="t">mat-cell</span> <span class="a">*matCellDef</span>=<span class="v">"let row"</span> <span class="a">magicMark</span>=<span class="v">"magicTableRowContainer"</span> <span class="a">data-comp-id</span>=<span class="v">"column-cell.4"</span><span class="g">&gt;</span></div>
<div class="cl" style="left:581px;top:775px"><span class="g">&lt;</span><span class="t">c-container</span> <span class="a">#matCell</span> <span class="a">[formGroup]</span>=<span class="v">"mg.getFormGroupByRow(row.rowId)"</span> <span class="a">*ngIf</span>=<span class="v">"mg.ifRowCreated(row)"</span> <span class="a">data-comp-id</span>=<span class="v">"c-container.5"</span><span class="g">&gt;</span></div>
<div class="cl" style="left:606px;top:791px"><span class="g">&lt;</span><span class="t">button</span> <span class="a">[magic]</span>=<span class="v">"mgc.btnDelete"</span> <span class="a">[innerHTML]</span>=<span class="v">"mg.getText(mgc.btnDelete,row.rowId)"</span> <span class="a">data-comp-id</span>=<span class="v">"button.2"</span><span class="g">&gt;</span>Button<span class="g">&lt;/</span><span class="t">button</span><span class="g">&gt;</span></div>
<div class="cl" style="left:581px;top:807px"><span class="g">&lt;/</span><span class="t">c-container</span><span class="g">&gt;</span></div>
<div class="cl" style="left:555px;top:822px"><span class="g">&lt;/</span><span class="t">mat-cell</span><span class="g">&gt;</span></div>
<div class="cl" style="left:529px;top:838px"><span class="g">&lt;/</span><span class="t">ng-container</span><span class="g">&gt;</span></div>
<div class="cl" style="left:503px;top:854px"><span class="g">&lt;/</span><span class="t">mat-table</span><span class="g">&gt;</span></div>
<div class="p" style="left:1545px;top:721px;width:4px;height:67px;background:#bbb"></div>
<div class="p" style="left:1545px;top:571px;width:1px;height:298px;background:#eee"></div>

<!-- right panel -->
<div class="p" style="left:1549px;top:42px;width:2px;height:827px;background:#dcdcdc"></div>
<div class="p" style="left:1551px;top:42px;width:3px;height:827px;background:#bbb"></div>
<div class="p" style="left:1554px;top:42px;width:366px;height:827px;background:#f3f3f3"></div>
<div class="tab" style="left:1558px;top:46px;width:82px;height:23px">
<svg style="position:absolute;left:9px;top:4px;width:13px;height:15px" viewBox="0 0 13 15"><ellipse cx="6.500" cy="2.500" rx="6.500" ry="2.500" fill="#777"/><path d="M0 4.500c1 2 12 2 13 0v2.500c-1 2-12 2-13 0zM0 8.500c1 2 12 2 13 0V11c-1 2-12 2-13 0zM0 12c1 2 12 2 13 0v.5c-1 3-12 3-13 0z" fill="#777"/></svg><span style="left:35px">Model</span></div>
<div class="tab" style="left:1645px;top:46px;width:84px;height:23px;background:#6db8e0;border-color:#8c9aa5;color:#fff">
<svg style="position:absolute;left:8px;top:5px;width:16px;height:13px" viewBox="0 0 16 13"><rect x="5.500" width="5" height="4" fill="#fff"/><path d="M8 4v3M2.500 9V6.500h11V9M8 6.500V9" stroke="#fff" fill="none"/><rect y="9" width="4.500" height="4" fill="#fff"/><rect x="5.700" y="9" width="4.500" height="4" fill="#fff"/><rect x="11.500" y="9" width="4.500" height="4" fill="#fff"/></svg><span style="left:37px">Outline</span></div>
<div class="tab" style="left:1733px;top:46px;width:122px;height:23px">
<svg style="position:absolute;left:15px;top:5px;width:9px;height:13px" viewBox="0 0 9 13"><path d="M0 1h9M0 3.500h9M0 6h9M0 8.500h9M0 11h9" stroke="#777" stroke-width="1.500"/></svg><span style="left:37px">PropertySheet</span></div>
<div class="p" style="left:1554px;top:69px;width:366px;height:4px;background:#0095da"></div>

<div class="p" style="left:1644px;top:340px;width:271px;height:26px;background:#e3f0f8"></div>

<div class="r o" style="--l:0;top:77px"><svg><use href="#c"/></svg>c-container.1</div>
<div class="r o" style="--l:1;top:105px"><svg><use href="#c"/></svg>c-row.1</div>
<div class="r o" style="--l:2;top:131px"><svg><use href="#c"/></svg>c-column.1</div>
<div class="r" style="--l:3;top:158px"><svg><use href="#c"/></svg>button.1</div>
<div class="r o" style="--l:1;top:185px"><svg><use href="#c"/></svg>c-row.2</div>
<div class="r o" style="--l:2;top:211px"><svg><use href="#c"/></svg>c-column.2</div>
<div class="r o" style="--l:3;top:238px"><svg><use href="#c"/></svg>table-container.1</div>
<div class="r o" style="--l:4;top:265px"><svg><use href="#c"/></svg>table.1</div>
<div class="r o" style="--l:5;top:291px"><svg><use href="#c"/></svg>table-column.1</div>
<div class="r" style="--l:6;top:318px"><svg><use href="#c"/></svg>table-header-cell.1</div>
<div class="r o" style="--l:6;top:345px"><svg><use href="#c"/></svg>column-cell.1</div>
<div class="r o" style="--l:7;top:370px"><svg><use href="#c"/></svg>c-container.2</div>
<div class="r" style="--l:8;top:398px"><svg><use href="#c"/></svg>mat-select-input.1</div>
<div class="r o" style="--l:5;top:425px"><svg><use href="#c"/></svg>table-column.2</div>
<div class="r" style="--l:6;top:451px"><svg><use href="#c"/></svg>table-header-cell.2</div>
<div class="r o" style="--l:6;top:478px"><svg><use href="#c"/></svg>column-cell.2</div>
<div class="r o" style="--l:7;top:505px"><svg><use href="#c"/></svg>c-container.3</div>
<div class="r" style="--l:8;top:531px"><svg><use href="#c"/></svg>mat-input.1</div>
<div class="r o" style="--l:5;top:558px"><svg><use href="#c"/></svg>table-column.3</div>
<div class="r" style="--l:6;top:585px"><svg><use href="#c"/></svg>table-header-cell.3</div>
<div class="r o" style="--l:6;top:611px"><svg><use href="#c"/></svg>column-cell.3</div>
<div class="r o" style="--l:7;top:638px"><svg><use href="#c"/></svg>c-container.4</div>
<div class="r" style="--l:8;top:665px"><svg><use href="#c"/></svg>mat-checkbox-custom.1</div>
<div class="r o" style="--l:5;top:691px"><svg><use href="#c"/></svg>table-column.4</div>
<div class="r" style="--l:6;top:718px;font-weight:bold"><svg><use href="#c"/></svg>table-header-cell.4</div>
<div class="r o" style="--l:6;top:745px"><svg><use href="#c"/></svg>column-cell.4</div>
<div class="r o" style="--l:7;top:771px"><svg><use href="#c"/></svg>c-container.5</div>
<div class="r" style="--l:8;top:798px"><svg><use href="#c"/></svg>button.2</div>
<div class="r" style="--l:4;top:825px"><svg><use href="#c"/></svg>mat-paginator.1</div>

<svg class="eye" style="top:293px"><use href="#eye"/></svg>
<svg class="eye" style="top:347px"><use href="#eye"/></svg>
<svg class="eye" style="top:427px"><use href="#eye"/></svg>
<svg class="eye" style="top:560px"><use href="#eye"/></svg>
<svg class="eye" style="top:693px"><use href="#eye"/></svg>

<!-- annotations -->
<svg class="p" style="left:0;top:0;width:1920px;height:869px;pointer-events:none" viewBox="0 0 1920 869">
<path d="M1735 212C1790 208 1846 246 1873 306" fill="none" stroke="#ffd23f" stroke-width="12" stroke-linecap="round"/>
<path d="M1886 275L1876 311L1833 298" fill="none" stroke="#ffd23f" stroke-width="12" stroke-linecap="round" stroke-linejoin="round"/>
<rect x="1626" y="32" width="120" height="58" fill="none" stroke="#ffd23f" stroke-width="10"/>
<path d="M1920 322H1607V383H1920" fill="none" stroke="#ffd23f" stroke-width="10"/>
<rect x="1915" y="317" width="5" height="71" fill="#ffd23f"/>
<g transform="translate(1876 346)"><rect x=".5" y=".5" width="14" height="11" rx="1" fill="#e3f0f8" stroke="#1a8fd8"/><rect x="1" y="1" width="13" height="2.500" fill="#1a8fd8"/><path d="M3 5.500h9M3 7.500h9M3 9.500h9" stroke="#1a8fd8" stroke-width=".9"/></g>
<circle cx="1882" cy="352" r="21.500" fill="none" stroke="#ff3b30" stroke-width="10"/>
</svg>
</body></html>
